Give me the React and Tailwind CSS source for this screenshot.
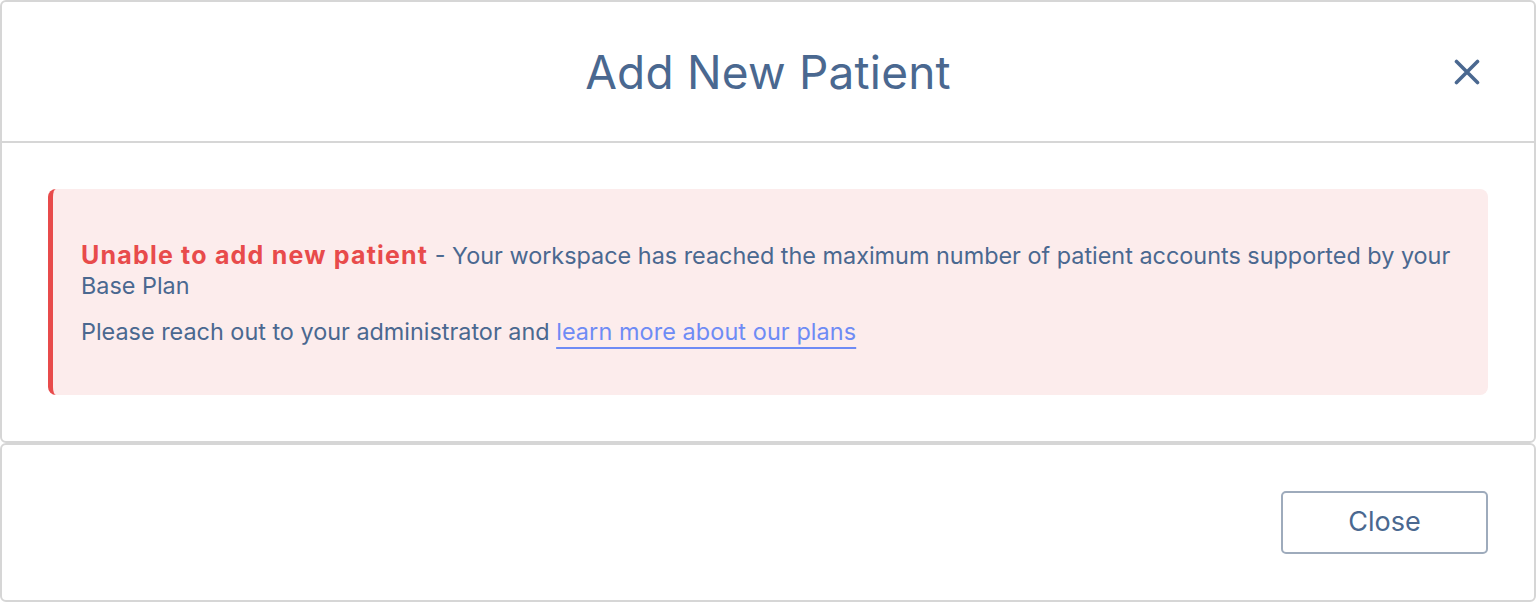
export default function App() {
  const font = { fontFamily: 'Inter, "Open Sans", sans-serif' };
  return (
    <div className="w-[1536px] h-[603px] bg-white flex flex-col" style={font}>
      <div className="h-[443px] border-2 border-[#d6d6d6] rounded-[6px] flex flex-col">
        <div className="h-[141px] border-b-2 border-[#d6d6d6] flex items-center justify-center relative">
          <h1 className="text-[46px] text-[#4a6890] font-normal leading-none tracking-[0.2px]">Add New Patient</h1>
          <svg className="absolute right-[54px] top-[57px] text-[#4a6890]" width="26" height="26" viewBox="0 0 26 26" fill="none" stroke="currentColor" strokeWidth="3.6" strokeLinecap="round">
            <path d="M2.5 2.5 L23.5 23.5 M23.5 2.5 L2.5 23.5" />
          </svg>
        </div>
        <div className="flex-1 px-[46px] py-[46px]">
          <div className="bg-[#fcecec] rounded-[8px] border-l-[5px] border-[#e84b4b] pl-[28px] pr-[30px] pt-[51px] pb-[48px] text-[23.4px] leading-[30px] text-[#4a6890]">
            <p>
              <span className="text-[#e84b4b] font-bold text-[25px] leading-[30px] tracking-[1.2px]">Unable to add new patient</span>
              {" "}- Your workspace has reached the maximum number of patient accounts supported by your Base Plan
            </p>
            <p className="mt-[16px]">
              Please reach out to your administrator and{" "}
              <a href="#" className="text-[#6e8bf5] underline underline-offset-[7px] decoration-[1.5px] tracking-[0.1px]">learn more about our plans</a>
            </p>
          </div>
        </div>
      </div>
      <div className="h-[159px] border-2 border-[#d6d6d6] rounded-[6px] flex items-center justify-end pr-[46px]">
        <button className="w-[207px] h-[63px] border-2 border-[#9eabbc] rounded-[5px] text-[27px] text-[#4a6890]">Close</button>
      </div>
    </div>
  );
}
